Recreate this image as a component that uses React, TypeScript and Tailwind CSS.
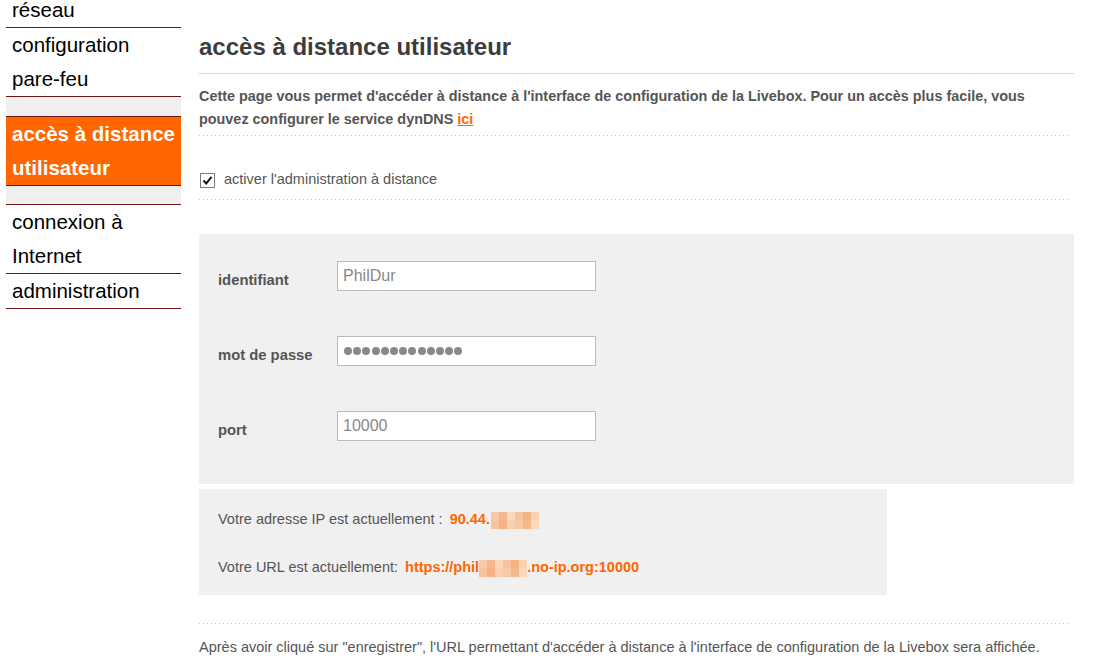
import React from "react";

const font = { fontFamily: '"Liberation Sans", Arial, sans-serif' };

function Dotted() {
    return <div className="h-px w-[871px] bg-[linear-gradient(to_right,#eeb48a_1px,transparent_1px)] bg-[length:4px_1px] bg-repeat-x"></div>;
}

function Blur({ w }: { w: number }) {
    // pixelated blur blocks hiding private data
    const cols = ["#f8c9a6", "#f5b78c", "#fad7bd", "#f7c29c", "#f4b285", "#f9cfb2"];
    const n = Math.round(w / 8);
    return (
        <span className="inline-flex h-[17px] align-middle">
            {Array.from({ length: n }).map((_, i) => (
                <span key={i} className="flex flex-col w-[8px]">
                    <span className="h-[8px]" style={{ background: cols[i % cols.length] }}></span>
                    <span className="h-[9px]" style={{ background: cols[(i + 3) % cols.length] }}></span>
                </span>
            ))}
        </span>
    );
}

function NavItem({ lines }: { lines: string[] }) {
    return (
        <div className="border-b border-[#6e1414] pl-[6px] text-[20.5px] leading-[34px] text-black">
            {lines.map((l) => <div key={l}>{l}</div>)}
        </div>
    );
}

function Field({ label, children }: { label: string; children: React.ReactNode }) {
    return (
        <div className="flex items-center h-[30px]">
            <div className="w-[119px] pt-[9px] text-[14.8px] font-bold text-[#555]">{label}</div>
            <div className="w-[259px] h-[30px] border border-[#bbb] bg-white flex items-center pl-[5px] text-[16px] text-[#888]">
                {children}
            </div>
        </div>
    );
}

export default function App() {
    return (
        <div className="flex bg-white w-[1097px] h-[672px] overflow-hidden" style={font}>
            {/* left menu */}
            <div className="ml-[6px] w-[175px] mt-[-7px] shrink-0">
                <NavItem lines={["réseau"]} />
                <NavItem lines={["configuration", "pare-feu"]} />
                <div className="h-[20px] bg-[#f0f0f0] border-b border-[#6e1414]"></div>
                <div className="bg-[#ff6600] border-b border-[#6e1414] pl-[6px] text-[20.5px] leading-[34px] font-bold text-white">
                    <div>accès à distance</div>
                    <div>utilisateur</div>
                </div>
                <div className="h-[19px] bg-[#f0f0f0] border-b border-[#6e1414]"></div>
                <NavItem lines={["connexion à", "Internet"]} />
                <NavItem lines={["administration"]} />
            </div>

            {/* main */}
            <div className="ml-[18px] w-[875px] pt-[31px]">
                <h1 className="text-[24px] leading-[32px] font-bold text-[#3c3c3c]">accès à distance utilisateur</h1>
                <div className="mt-[10px] h-px bg-[#d4d4d4]"></div>
                <p className="mt-[11px] text-[14.4px] leading-[23px] font-bold text-[#555]">
                    Cette page vous permet d'accéder à distance à l'interface de configuration de la Livebox. Pour un accès plus facile, vous pouvez configurer le service dynDNS <span className="text-[#ff6600] underline">ici</span>
                </p>
                <div className="mt-[4px]"><Dotted /></div>

                <div className="flex items-end h-[63px] pb-[11px]">
                    <div className="ml-[1px] w-[15px] h-[15px] border border-[#7a7a7a] bg-white flex items-center justify-center">
                        <svg width="11" height="11" viewBox="0 0 11 11">
                            <path d="M1.5 5.5 L4.2 8.5 L9.5 1.8" fill="none" stroke="#111" strokeWidth="2" />
                        </svg>
                    </div>
                    <span className="ml-[9px] text-[14.5px] leading-[17px] text-[#555]">activer l'administration à distance</span>
                </div>
                <Dotted />

                <div className="mt-[34px] bg-[#f0f0f0] h-[250px] pl-[19px] pt-[27px] flex flex-col gap-[45px]">
                    <Field label="identifiant">PhilDur</Field>
                    <Field label="mot de passe">
                        <div className="flex gap-[1.2px] pl-[1px]">
                            {Array.from({ length: 13 }).map((_, i) => (
                                <span key={i} className="w-[8px] h-[8px] rounded-full bg-[#888]"></span>
                            ))}
                        </div>
                    </Field>
                    <Field label="port">10000</Field>
                </div>

                <div className="mt-[5px] w-[688px] h-[106px] bg-[#f0f0f0] pl-[19px] pt-[21px] text-[14.5px] text-[#555]">
                    <div className="h-[20px] flex items-center">
                        Votre adresse IP est actuellement :&nbsp;
                        <span className="ml-[3px] font-bold text-[#ff6600]">90.44.</span>
                        <span className="ml-[1px]"><Blur w={44} /></span>
                    </div>
                    <div className="mt-[28px] h-[20px] flex items-center">
                        Votre URL est actuellement:&nbsp;
                        <span className="ml-[3px] font-bold text-[#ff6600]">https://phil</span>
                        <Blur w={48} />
                        <span className="font-bold text-[#ff6600]">.no-ip.org:10000</span>
                    </div>
                </div>

                <div className="mt-[28px]"><Dotted /></div>
                <p className="mt-[13px] text-[14.5px] leading-[20px] text-[#555]">
                    Après avoir cliqué sur "enregistrer", l'URL permettant d'accéder à distance à l'interface de configuration de la Livebox sera affichée.
                </p>
            </div>
        </div>
    );
}
